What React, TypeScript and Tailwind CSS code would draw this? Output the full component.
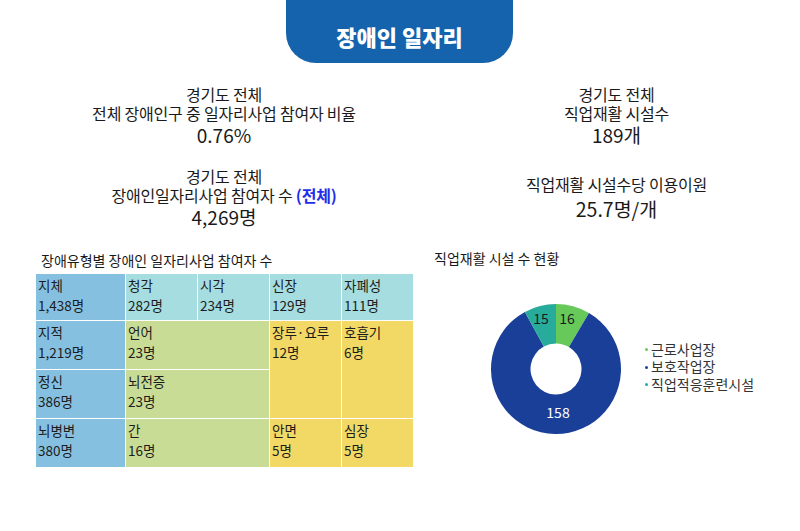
import React from 'react';

const FONT = { fontFamily: '"Noto Sans CJK KR", "Noto Sans", sans-serif' };

type Cell = { label: string; value: string; cls: string };

const cells: Cell[] = [
  { label: '지체', value: '1,438명', cls: 'bg-[#86c0e0] col-start-1 row-start-1' },
  { label: '청각', value: '282명', cls: 'bg-[#a6dde0] col-start-2 row-start-1' },
  { label: '시각', value: '234명', cls: 'bg-[#a6dde0] col-start-3 row-start-1' },
  { label: '신장', value: '129명', cls: 'bg-[#a6dde0] col-start-4 row-start-1' },
  { label: '자폐성', value: '111명', cls: 'bg-[#a6dde0] col-start-5 row-start-1' },
  { label: '지적', value: '1,219명', cls: 'bg-[#86c0e0] col-start-1 row-start-2' },
  { label: '언어', value: '23명', cls: 'bg-[#c8dc95] col-start-2 col-span-2 row-start-2' },
  { label: '장루·요루', value: '12명', cls: 'bg-[#f2d966] col-start-4 row-start-2 row-span-2' },
  { label: '호흡기', value: '6명', cls: 'bg-[#f2d966] col-start-5 row-start-2 row-span-2' },
  { label: '정신', value: '386명', cls: 'bg-[#86c0e0] col-start-1 row-start-3' },
  { label: '뇌전증', value: '23명', cls: 'bg-[#c8dc95] col-start-2 col-span-2 row-start-3' },
  { label: '뇌병변', value: '380명', cls: 'bg-[#86c0e0] col-start-1 row-start-4' },
  { label: '간', value: '16명', cls: 'bg-[#c8dc95] col-start-2 col-span-2 row-start-4' },
  { label: '안면', value: '5명', cls: 'bg-[#f2d966] col-start-4 row-start-4' },
  { label: '심장', value: '5명', cls: 'bg-[#f2d966] col-start-5 row-start-4' },
];

// donut slices, clockwise from 12 o'clock
const slices = [
  { value: 16, color: '#66c95a' },
  { value: 158, color: '#1a3f99' },
  { value: 15, color: '#27ab9b' },
];

const arcPath = (a0: number, a1: number, r: number, ri: number, cx: number, cy: number) => {
  const pt = (a: number, rr: number) => {
    const t = ((a - 90) * Math.PI) / 180;
    return `${cx + rr * Math.cos(t)} ${cy + rr * Math.sin(t)}`;
  };
  const large = a1 - a0 > 180 ? 1 : 0;
  return `M ${pt(a0, r)} A ${r} ${r} 0 ${large} 1 ${pt(a1, r)} L ${pt(a1, ri)} A ${ri} ${ri} 0 ${large} 0 ${pt(a0, ri)} Z`;
};

const Donut = () => {
  const total = slices.reduce((s, d) => s + d.value, 0);
  let acc = 0;
  return (
    <svg width="140" height="140" viewBox="0 0 140 140">
      {slices.map((s, i) => {
        const a0 = (acc / total) * 360;
        acc += s.value;
        const a1 = (acc / total) * 360;
        return <path key={i} d={arcPath(a0, a1, 65, 25.5, 70, 70)} fill={s.color} />;
      })}
      <text x="55" y="25" textAnchor="middle" fontSize="14" fill="#1a1a1a" style={FONT}>15</text>
      <text x="81" y="25" textAnchor="middle" fontSize="14" fill="#1a1a1a" style={FONT}>16</text>
      <text x="72" y="119" textAnchor="middle" fontSize="14" fill="#ffffff" style={FONT}>158</text>
    </svg>
  );
};

export default function App() {
  return (
    <div className="w-[800px] h-[531px] bg-white text-[#1a1a1a] overflow-hidden" style={FONT}>
      {/* Tab header */}
      <div className="flex justify-center">
        <div className="w-[227px] h-[63px] ml-[-1px] bg-[#1563ad] rounded-b-[30px] flex items-center justify-center pt-[10px]">
          <span className="text-white text-[22px] font-extrabold">장애인 일자리</span>
        </div>
      </div>

      <div className="flex pl-[36px]">
        {/* Left column */}
        <div className="w-[376px] flex flex-col">
          <div className="mt-[22px] flex flex-col items-center text-[16px] leading-[19px] tracking-[-0.2px]">
            <div>경기도 전체</div>
            <div>전체 장애인구 중 일자리사업 참여자 비율</div>
            <div className="text-[19px] leading-[24px] tracking-normal">0.76%</div>
          </div>
          <div className="mt-[20px] flex flex-col items-center text-[16px] leading-[19px] tracking-[-0.2px]">
            <div>경기도 전체</div>
            <div>
              장애인일자리사업 참여자 수 <span className="text-[#1f2ee8] font-semibold">(전체)</span>
            </div>
            <div className="text-[19px] leading-[24px] tracking-normal">4,269명</div>
          </div>

          <div className="mt-[21px] pl-[5px] text-[14px] leading-[20px]">
            장애유형별 장애인 일자리사업 참여자 수
          </div>
          <div className="mt-[4px] grid grid-cols-[89px_71px_71px_71px_71px] grid-rows-[46px_48px_48px_48px] gap-px bg-white">
            {cells.map((c, i) => (
              <div key={i} className={`${c.cls} pl-[2px] pt-px text-[13.5px] leading-[20px] text-[#1c1c1c]`}>
                <div>{c.label}</div>
                <div>{c.value}</div>
              </div>
            ))}
          </div>
        </div>

        {/* Right column */}
        <div className="w-[367px] ml-[21px] flex flex-col">
          <div className="mt-[22px] flex flex-col items-center text-[16px] leading-[19px] tracking-[-0.2px]">
            <div>경기도 전체</div>
            <div>직업재활 시설수</div>
            <div className="text-[19px] leading-[23px] tracking-normal">189개</div>
          </div>
          <div className="mt-[29px] flex flex-col items-center text-[16px] leading-[19px] tracking-[-0.2px]">
            <div>직업재활 시설수당 이용이원</div>
            <div className="mt-[3px] text-[19.5px] leading-[24px] tracking-normal">25.7명/개</div>
          </div>

          <div className="mt-[27px] pl-px text-[14px] leading-[20px]">
            직업재활 시설 수 현황
          </div>
          <div className="mt-[31px] flex items-center">
            <div className="ml-[53px]">
              <Donut />
            </div>
            <div className="ml-[19px] mt-[-4px] flex flex-col text-[14px] leading-[17.5px] text-[#333]">
              <div className="flex items-center gap-[3px]">
                <span className="w-[3px] h-[3px] rounded-full bg-[#66c95a]" />
                근로사업장
              </div>
              <div className="flex items-center gap-[3px]">
                <span className="w-[3px] h-[3px] rounded-full bg-[#1a3f99]" />
                보호작업장
              </div>
              <div className="flex items-center gap-[3px]">
                <span className="w-[3px] h-[3px] rounded-full bg-[#27ab9b]" />
                직업적응훈련시설
              </div>
            </div>
          </div>
        </div>
      </div>
    </div>
  );
}
